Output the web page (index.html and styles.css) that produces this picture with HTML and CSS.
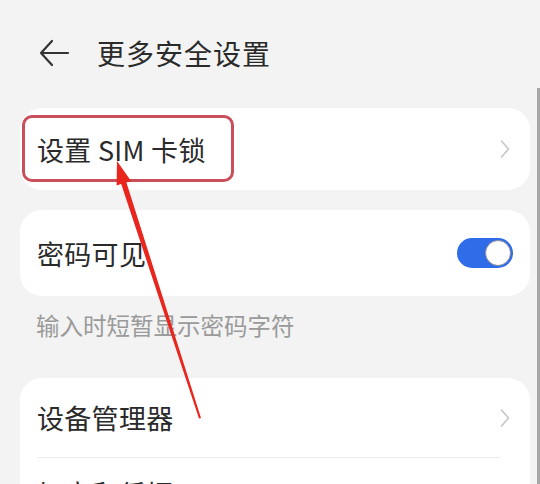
FILE: index.html
```html
<!DOCTYPE html>
<html lang="zh-CN">
<head>
<meta charset="utf-8">
<link rel="stylesheet" href="styles.css">
</head>
<body>
<div class="page">
  <header class="topbar">
    <svg class="back" width="32" height="28" viewBox="0 0 32 28"><path d="M30 14H3M14 2L3 14l11 12" fill="none" stroke="#333" stroke-width="2.2" stroke-linecap="round" stroke-linejoin="round"/></svg>
    <h1 class="title">更多安全设置</h1>
  </header>

  <section class="card card-sim">
    <div class="row">
      <span class="label">设置 SIM 卡锁</span>
      <svg class="chev" width="10" height="20" viewBox="0 0 10 20"><path d="M1.5 2l7 8-7 8" fill="none" stroke="#c6c6c6" stroke-width="1.6" stroke-linecap="round" stroke-linejoin="round"/></svg>
    </div>
    <div class="mark"></div>
  </section>

  <section class="card card-pwd">
    <div class="row row-pwd">
      <span class="label">密码可见</span>
      <span class="switch"><span class="knob"></span></span>
    </div>
  </section>

  <p class="hint">输入时短暂显示密码字符</p>

  <section class="card card-dev">
    <div class="row row-dev">
      <span class="label">设备管理器</span>
      <svg class="chev" width="10" height="20" viewBox="0 0 10 20"><path d="M1.5 2l7 8-7 8" fill="none" stroke="#c6c6c6" stroke-width="1.6" stroke-linecap="round" stroke-linejoin="round"/></svg>
    </div>
    <div class="divider"></div>
    <div class="row row-dev row-last">
      <span class="label">加密和凭据</span>
    </div>
  </section>

  <div class="scrollbar"></div>

  <svg class="pointer" width="540" height="484" viewBox="0 0 540 484">
    <polygon points="117,161 131,181 126.4,182.4 201,418 199,418.6 121.2,184 116.6,185.6" fill="#e8261d"/>
  </svg>
</div>
</body>
</html>
```

FILE: styles.css
```css
* { box-sizing: border-box; }
html, body { margin: 0; padding: 0; }
body {
  background: #f3f3f3;
  font-family: "Noto Sans CJK SC", "Noto Sans", sans-serif;
  color: #222;
  width: 540px;
  height: 484px;
  overflow: hidden;
}
.page {
  position: relative;
  width: 540px;
  height: 484px;
  overflow: hidden;
}
.topbar {
  height: 108px;
  display: flex;
  align-items: center;
  padding-left: 38px;
  padding-bottom: 2px;
}
.back { display: block; margin-right: 27px; }
.title {
  margin: 0;
  font-size: 28px;
  font-weight: 400;
  color: #2a2a2a;
  letter-spacing: 1px;
}
.card {
  position: relative;
  background: #fff;
  border-radius: 22px;
  margin: 0 10px 0 20px;
}
.row {
  display: flex;
  align-items: center;
  justify-content: space-between;
  height: 82px;
  padding: 0 20px 0 17px;
}
.row-pwd { height: 86px; padding-right: 17px; }
.row-dev { height: 79px; }
.row-last { align-items: flex-start; padding-top: 16px; }
.label {
  font-size: 27px;
  font-weight: 400;
  color: #2a2a2a;
  letter-spacing: 0.3px;
}
.card-pwd { margin-top: 20px; }
.mark {
  position: absolute;
  left: 2px;
  top: 7px;
  width: 212px;
  height: 67px;
  border: 3px solid #c94f5a;
  border-radius: 10px;
}
.switch {
  display: flex;
  align-items: center;
  justify-content: flex-end;
  width: 56px;
  height: 30px;
  border-radius: 15px;
  background: #2f6ce8;
  padding: 2px;
}
.knob {
  width: 26px;
  height: 26px;
  border-radius: 50%;
  background: #fff;
  border: 1px solid #8a8f9a;
}
.hint {
  margin: 0;
  height: 82px;
  padding: 14px 0 0 36px;
  font-size: 23.5px;
  color: #9a9a9a;
  line-height: 30px;
}
.divider {
  height: 1px;
  background: #ececec;
  margin: 0 30px 0 17px;
}
.scrollbar {
  position: absolute;
  right: 0;
  top: 88px;
  width: 3px;
  height: 400px;
  background: #a8a8a8;
}
.pointer {
  position: absolute;
  left: 0;
  top: 0;
  pointer-events: none;
}
```
